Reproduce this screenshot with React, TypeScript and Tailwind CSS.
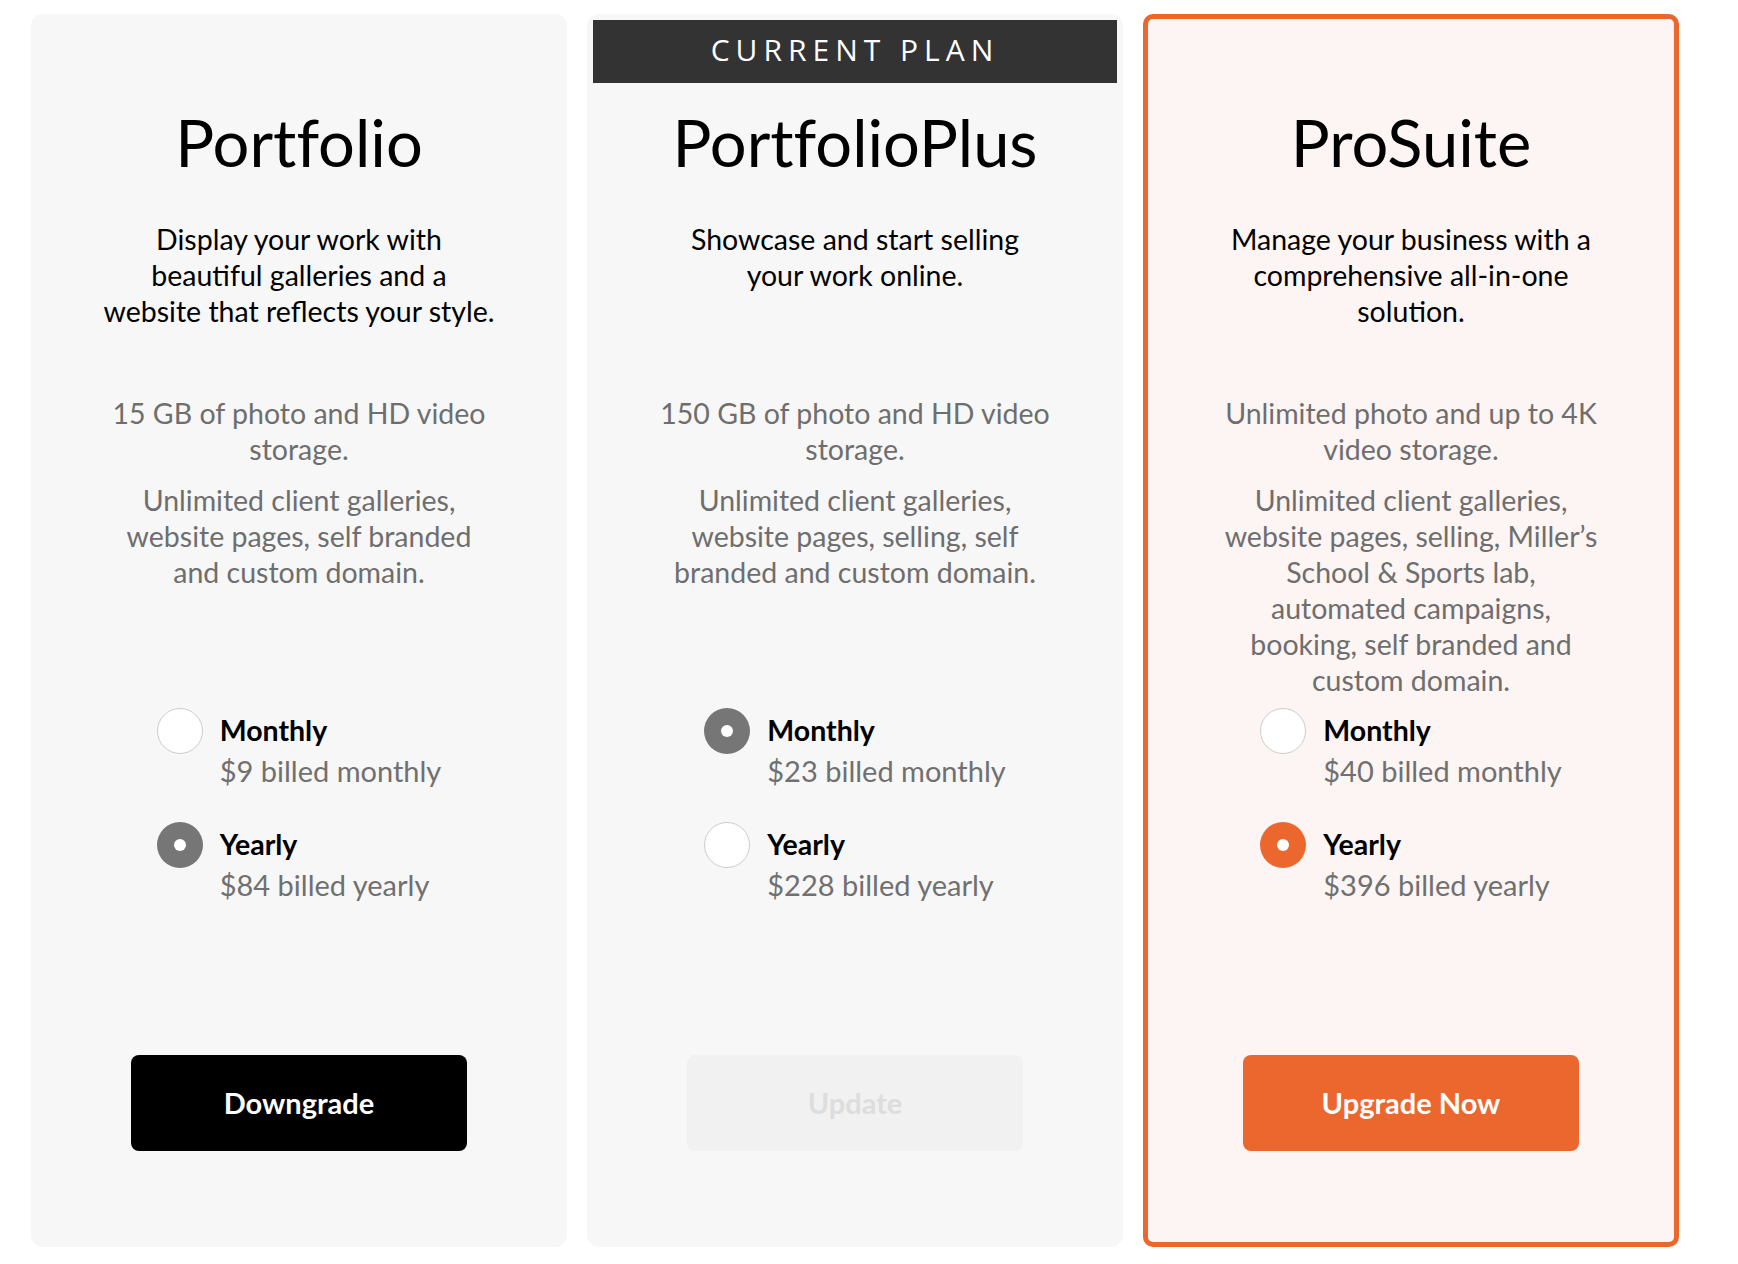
import { useState } from 'react';

type Plan = {
  name: string;
  desc: string[];
  features: string[][];
  monthly: string;
  yearly: string;
  current?: boolean;
  highlight?: boolean;
  button: string;
};

const plans: Plan[] = [
  {
    name: 'Portfolio',
    desc: ['Display your work with', 'beautiful galleries and a', 'website that reflects your style.'],
    features: [
      ['15 GB of photo and HD video', 'storage.'],
      ['Unlimited client galleries,', 'website pages, self branded', 'and custom domain.'],
    ],
    monthly: '$9 billed monthly',
    yearly: '$84 billed yearly',
    button: 'Downgrade',
  },
  {
    name: 'PortfolioPlus',
    desc: ['Showcase and start selling', 'your work online.'],
    features: [
      ['150 GB of photo and HD video', 'storage.'],
      ['Unlimited client galleries,', 'website pages, selling, self', 'branded and custom domain.'],
    ],
    monthly: '$23 billed monthly',
    yearly: '$228 billed yearly',
    current: true,
    button: 'Update',
  },
  {
    name: 'ProSuite',
    desc: ['Manage your business with a', 'comprehensive all-in-one', 'solution.'],
    features: [
      ['Unlimited photo and up to 4K', 'video storage.'],
      [
        'Unlimited client galleries,',
        'website pages, selling, Miller\u2019s',
        'School & Sports lab,',
        'automated campaigns,',
        'booking, self branded and',
        'custom domain.',
      ],
    ],
    monthly: '$40 billed monthly',
    yearly: '$396 billed yearly',
    highlight: true,
    button: 'Upgrade Now',
  },
];

function Radio({ checked, orange }: { checked: boolean; orange?: boolean }) {
  if (!checked) {
    return <div className="w-[46px] h-[46px] shrink-0 rounded-full bg-white border-[1.5px] border-[#cccccc]" />;
  }
  return (
    <div className={`w-[46px] h-[46px] shrink-0 rounded-full flex items-center justify-center ${orange ? 'bg-[#ec672e]' : 'bg-[#767676]'}`}>
      <div className="w-[12px] h-[12px] rounded-full bg-white" />
    </div>
  );
}

function PlanCard({ plan, initial }: { plan: Plan; initial: 'monthly' | 'yearly' }) {
  const [period, setPeriod] = useState(initial);

  const cardCls = plan.highlight
    ? 'border-[#ec672e] bg-[#fdf5f3] rounded-[10px]'
    : 'border-transparent bg-[#f7f7f7] rounded-xl';

  let btnCls = 'bg-black text-white';
  if (plan.highlight) btnCls = 'bg-[#ec672e] text-white';
  if (plan.current) btnCls = 'bg-[#f1f1f1] text-[#dddddd]';

  return (
    <div className={`w-[536px] h-[1233px] shrink-0 flex flex-col items-center border-[5px] p-px ${cardCls}`}>
      {plan.current ? (
        <div className="w-full h-[63px] pb-[5px] bg-[#333333] flex items-center justify-center text-white text-[30px] tracking-[0.2em] font-['Open_Sans',sans-serif]">
          CURRENT PLAN
        </div>
      ) : (
        <div className="h-[63px]" />
      )}

      <h2 className="mt-[19px] h-[80px] text-[65px] leading-[80px] text-black [font-variant-ligatures:none]">
        {plan.name}
      </h2>

      <div className="mt-[39px] min-h-[108px] text-center text-[28.5px] leading-[36px] text-black">
        {plan.desc.map((l) => (
          <div key={l}>{l}</div>
        ))}
      </div>

      <div className="mt-[66px] min-h-[303px] flex flex-col gap-[15px] text-center text-[28.5px] leading-[36px] text-[#6e6e6e]">
        {plan.features.map((p, i) => (
          <div key={i}>
            {p.map((l) => (
              <div key={l}>{l}</div>
            ))}
          </div>
        ))}
      </div>

      <div className="mt-[10px] flex flex-col gap-[33px]">
        {(['monthly', 'yearly'] as const).map((p) => (
          <button key={p} onClick={() => setPeriod(p)} className="flex items-start gap-[17px] text-left">
            <Radio checked={period === p} orange={plan.highlight} />
            <div className="pt-[4px]">
              <div className="text-[28.5px] leading-[36px] font-bold text-black">{p === 'monthly' ? 'Monthly' : 'Yearly'}</div>
              <div className="mt-[5px] text-[29px] leading-[36px] text-[#707070]">{p === 'monthly' ? plan.monthly : plan.yearly}</div>
            </div>
          </button>
        ))}
      </div>

      <button className={`mt-auto mb-[90px] w-[336px] h-[96px] rounded-lg text-[29px] font-bold ${btnCls}`}>
        {plan.button}
      </button>
    </div>
  );
}

export default function App() {
  return (
    <div className="min-h-screen bg-white font-['Lato',sans-serif] pt-[14px] pl-[31px] flex gap-[20px]">
      <PlanCard plan={plans[0]} initial="yearly" />
      <PlanCard plan={plans[1]} initial="monthly" />
      <PlanCard plan={plans[2]} initial="yearly" />
    </div>
  );
}
